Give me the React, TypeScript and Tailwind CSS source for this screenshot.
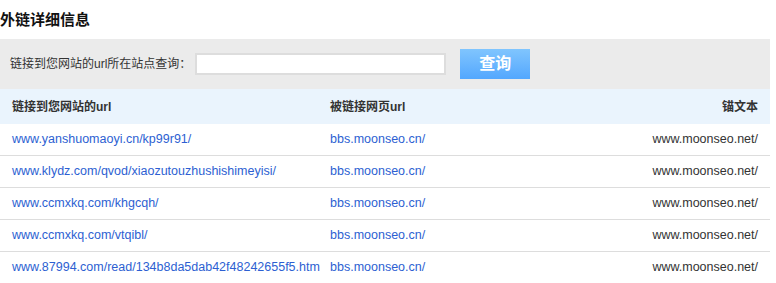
import React from "react";

// Backlink rows: source url, linked page, anchor text
const rows = [
	{ from: "www.yanshuomaoyi.cn/kp99r91/", to: "bbs.moonseo.cn/", anchor: "www.moonseo.net/" },
	{ from: "www.klydz.com/qvod/xiaozutouzhushishimeyisi/", to: "bbs.moonseo.cn/", anchor: "www.moonseo.net/" },
	{ from: "www.ccmxkq.com/khgcqh/", to: "bbs.moonseo.cn/", anchor: "www.moonseo.net/" },
	{ from: "www.ccmxkq.com/vtqibl/", to: "bbs.moonseo.cn/", anchor: "www.moonseo.net/" },
	{ from: "www.87994.com/read/134b8da5dab42f48242655f5.htm", to: "bbs.moonseo.cn/", anchor: "www.moonseo.net/" },
];

const font = "font-['Liberation_Sans','Noto_Sans_CJK_SC',sans-serif]";

export default function App() {
	return (
		<div className={`w-[776px] h-[283px] overflow-hidden bg-white ${font}`}>
			<div className="w-[770px]">
				<h2 className="h-[39px] pt-[10px] text-[15px] font-bold leading-[20px] text-[#111]">
					外链详细信息
				</h2>

				{/* Query bar */}
				<div className="flex h-[50px] items-center bg-[#ebebeb] pl-[10px]">
					<span className="text-[12px] text-[#333]">链接到您网站的url所在站点查询：</span>
					<input
						type="text"
						className="ml-[4px] h-[22px] w-[251px] border-2 border-[#dddddd] bg-white outline-none"
					/>
					<button className="ml-[14px] h-[30px] w-[70px] bg-gradient-to-b from-[#80c5fe] to-[#53a7fe] text-[16px] font-bold text-white">
						查询
					</button>
				</div>

				{/* Table */}
				<div className="flex h-[35px] items-center bg-[#eaf4fd] text-[12px] font-bold text-[#333]">
					<div className="w-[330px] pl-[12px]">链接到您网站的url</div>
					<div className="w-[200px]">被链接网页url</div>
					<div className="flex-1 pr-[12px] text-right">锚文本</div>
				</div>
				{rows.map((r, i) => (
					<div
						key={i}
						className="flex h-[32px] items-center border-b border-[#dddddd] text-[12.5px]"
					>
						<div className="w-[330px] pl-[12px] text-[#2d5fd2]">{r.from}</div>
						<div className="w-[200px] text-[#2d5fd2]">{r.to}</div>
						<div className="flex-1 pr-[12px] text-right text-[#333]">{r.anchor}</div>
					</div>
				))}
			</div>
		</div>
	);
}
